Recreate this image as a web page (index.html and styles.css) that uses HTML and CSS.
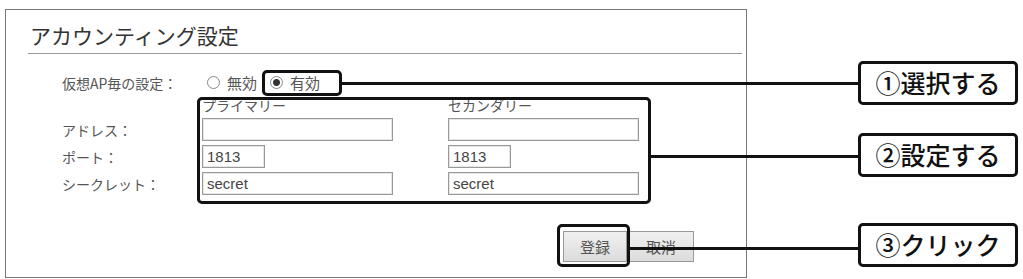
FILE: index.html
```html
<!DOCTYPE html>
<html lang="ja">
<head>
    <meta charset="UTF-8">
    <title>アカウンティング設定</title>
    <link rel="stylesheet" href="styles.css">
</head>
<body>
    <div class="figure">
        <div class="panel">
            <h2 class="panel-title">アカウンティング設定</h2>

            <div class="form">
                <div class="label">仮想AP毎の設定：</div>
                <div class="radios">
                    <span class="radio"><span class="dot"></span>無効</span>
                    <span class="radio radio-on marked"><span class="dot"></span>有効</span>
                </div>

                <div></div>
                <div class="col-head">プライマリー</div>
                <div class="col-head">セカンダリー</div>

                <div class="label">アドレス：</div>
                <div><input class="field field-wide" type="text" value=""></div>
                <div><input class="field field-wide" type="text" value=""></div>

                <div class="label">ポート：</div>
                <div><input class="field field-short" type="text" value="1813"></div>
                <div><input class="field field-short" type="text" value="1813"></div>

                <div class="label">シークレット：</div>
                <div><input class="field field-wide" type="text" value="secret"></div>
                <div><input class="field field-wide" type="text" value="secret"></div>
            </div>

            <div class="actions">
                <button class="btn btn-submit">登録</button>
                <button class="btn btn-cancel">取消</button>
            </div>
        </div>

        <!-- annotation overlay -->
        <div class="mark-box mark-fields"></div>
        <div class="mark-box mark-submit"></div>
        <div class="leader leader-1"></div>
        <div class="leader leader-2"></div>
        <div class="leader leader-3"></div>

        <div class="notes">
            <div class="note">①選択する</div>
            <div class="note note-2">②設定する</div>
            <div class="note note-3">③クリック</div>
        </div>
    </div>
</body>
</html>
```

FILE: styles.css
```css
* {
    box-sizing: border-box;
}

body {
    margin: 0;
    background: #fff;
    font-family: "Noto Sans CJK JP", "Noto Sans", sans-serif;
}

.figure {
    position: relative;
    width: 1023px;
    height: 279px;
    overflow: hidden;
}

.panel {
    width: 742px;
    height: 269px;
    margin: 9px 0 0 5px;
    border: 1px solid #777;
    display: flow-root;
}

.panel-title {
    margin: 0 4px 0 22px;
    padding: 13px 2px 5px;
    font-size: 21px;
    line-height: 25px;
    font-weight: 400;
    color: #333;
    border-bottom: 1px solid #999;
}

/* label column, primary column (field + gutter), secondary column */
.form {
    display: grid;
    grid-template-columns: 140px 246px 191px;
    grid-template-rows: 23px 22px 27px 27px 27px;
    align-items: center;
    margin: 17px 0 0 56px;
    font-size: 14px;
    color: #555;
}

.label {
    white-space: nowrap;
}

.radios {
    grid-column: 2 / 4;
    display: flex;
    align-items: center;
    padding-left: 5px;
    font-size: 15px;
}

.radio {
    display: inline-flex;
    align-items: center;
    gap: 7px;
    height: 23px;
}

.dot {
    width: 13px;
    height: 13px;
    border: 1px solid #888;
    border-radius: 50%;
    background: #fff;
}

.radio-on .dot {
    background: radial-gradient(circle, #333 0 3px, #fff 4px);
}

.marked {
    height: 26px;
    margin-left: 5px;
    padding: 0 19px 0 5px;
    border: 3px solid #111;
    border-radius: 5px;
    background: #fff;
}

.col-head {
    font-size: 14px;
    line-height: 16px;
    white-space: nowrap;
}

.field {
    display: block;
    height: 23px;
    padding: 0 4px;
    border: 1px solid #999;
    box-shadow: inset 0 0 0 1px #e6e6e6;
    font-family: "Liberation Sans", Arial, sans-serif;
    font-size: 15px;
    color: #444;
    background: #fff;
}

.field-wide {
    width: 191px;
}

.field-short {
    width: 63px;
}

.actions {
    display: flex;
    justify-content: flex-end;
    gap: 1px;
    margin: 34px 52px 0 0;
}

.btn {
    height: 31px;
    border: 1px solid #999;
    background: linear-gradient(#f0f0f0, #dcdcdc);
    font-family: "Noto Sans CJK JP", sans-serif;
    font-size: 15px;
    color: #555;
    padding: 0;
}

.btn-submit {
    width: 64px;
}

.btn-cancel {
    width: 66px;
}

/* annotations */
.mark-box {
    position: absolute;
    border: 3px solid #111;
    border-radius: 5px;
}

.mark-fields {
    left: 197px;
    top: 97px;
    width: 454px;
    height: 107px;
}

.mark-submit {
    left: 557px;
    top: 224px;
    width: 73px;
    height: 43px;
}

.leader {
    position: absolute;
    height: 3px;
    background: #111;
}

.leader-1 {
    left: 340px;
    top: 82px;
    width: 518px;
}

.leader-2 {
    left: 651px;
    top: 155px;
    width: 207px;
}

.leader-3 {
    left: 630px;
    top: 247px;
    width: 228px;
}

.notes {
    position: absolute;
    left: 858px;
    top: 61px;
    width: 160px;
}

.note {
    height: 44px;
    border: 3px solid #111;
    border-radius: 5px;
    background: #fff;
    text-align: center;
    font-size: 25px;
    line-height: 37px;
    font-weight: 500;
    color: #111;
}

.note-2 {
    margin-top: 28px;
}

.note-3 {
    margin-top: 46px;
}
```
